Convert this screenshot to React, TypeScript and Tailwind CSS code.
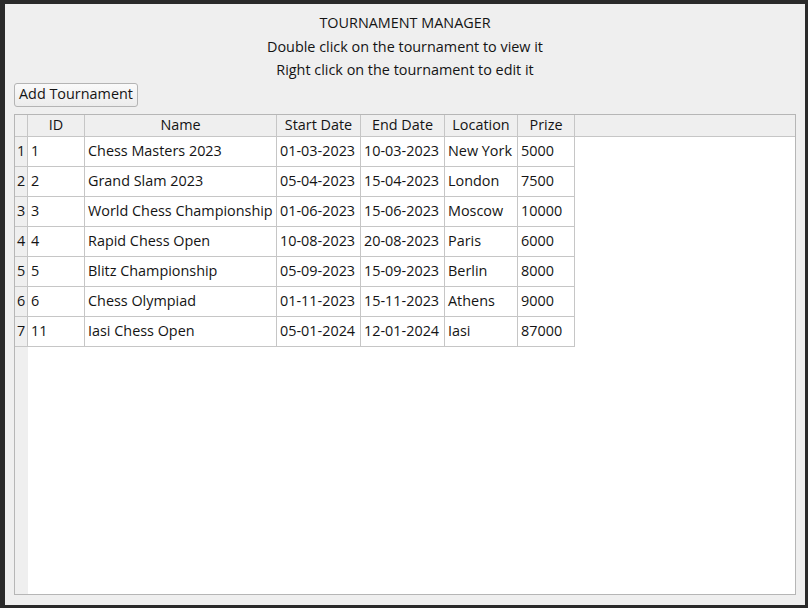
import React from "react";

type Tournament = {
  id: number;
  name: string;
  start: string;
  end: string;
  location: string;
  prize: number;
};

const tournaments: Tournament[] = [
  { id: 1, name: "Chess Masters 2023", start: "01-03-2023", end: "10-03-2023", location: "New York", prize: 5000 },
  { id: 2, name: "Grand Slam 2023", start: "05-04-2023", end: "15-04-2023", location: "London", prize: 7500 },
  { id: 3, name: "World Chess Championship", start: "01-06-2023", end: "15-06-2023", location: "Moscow", prize: 10000 },
  { id: 4, name: "Rapid Chess Open", start: "10-08-2023", end: "20-08-2023", location: "Paris", prize: 6000 },
  { id: 5, name: "Blitz Championship", start: "05-09-2023", end: "15-09-2023", location: "Berlin", prize: 8000 },
  { id: 6, name: "Chess Olympiad", start: "01-11-2023", end: "15-11-2023", location: "Athens", prize: 9000 },
  { id: 11, name: "Iasi Chess Open", start: "05-01-2024", end: "12-01-2024", location: "Iasi", prize: 87000 },
];

const columns = [
  { label: "ID", w: "w-[57px]" },
  { label: "Name", w: "w-[192px]" },
  { label: "Start Date", w: "w-[84px]" },
  { label: "End Date", w: "w-[84px]" },
  { label: "Location", w: "w-[73px]" },
  { label: "Prize", w: "w-[57px]" },
];

const App = () => {
  return (
    <div className="w-[808px] h-[608px] bg-[#2a2a2a] pt-[4px] pl-[5px] pr-[3px] pb-[3px] font-['Open_Sans',sans-serif] text-[14.4px] text-[#141414]">
      <div className="h-full bg-[#efefef] flex flex-col px-[9px] pb-[10px]">
        {/* heading */}
        <div className="flex flex-col items-center pt-[7px] leading-[23.5px]">
          <p>TOURNAMENT MANAGER</p>
          <p>Double click on the tournament to view it</p>
          <p>Right click on the tournament to edit it</p>
        </div>

        <div className="mt-[1px]">
          <button className="h-[24px] px-[4px] rounded-[3px] border border-[#b4b4b4] bg-gradient-to-b from-[#fafafa] to-[#ececec] leading-none">
            Add Tournament
          </button>
        </div>

        {/* table */}
        <div className="mt-[7px] flex-1 flex flex-col border border-[#b6b6b6] bg-white">
          <div className="flex h-[22px] bg-[#efefef] border-b border-[#c6c6c6]">
            <div className="w-[13px] border-r border-[#c6c6c6]" />
            {columns.map((c) => (
              <div key={c.label} className={`${c.w} flex items-center justify-center border-r border-[#c6c6c6]`}>
                {c.label}
              </div>
            ))}
          </div>
          <div className="flex-1 flex">
            <div className="w-[13px] bg-[#efefef] flex flex-col">
              {tournaments.map((t, i) => (
                <div key={t.id} className="h-[30px] flex items-center justify-center border-r border-b border-[#c6c6c6]">
                  {i + 1}
                </div>
              ))}
            </div>
            <div className="flex flex-col self-start">
              {tournaments.map((t) => (
                <div key={t.id} className="flex h-[30px]">
                  {[String(t.id), t.name, t.start, t.end, t.location, String(t.prize)].map((v, j) => (
                    <div key={j} className={`${columns[j].w} flex items-center pl-[3px] border-r border-b border-[#c6c6c6] whitespace-nowrap overflow-hidden`}>
                      {v}
                    </div>
                  ))}
                </div>
              ))}
            </div>
          </div>
        </div>
      </div>
    </div>
  );
};

export default App;
